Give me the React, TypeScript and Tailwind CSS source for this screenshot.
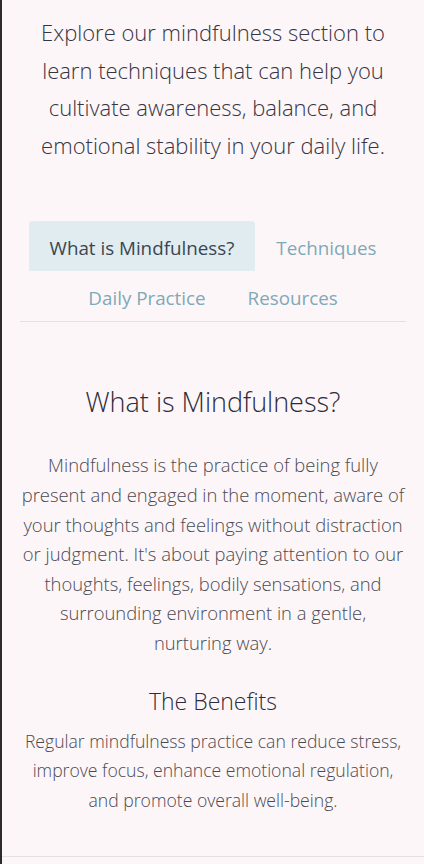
import { useState } from 'react'

const tabs = ['What is Mindfulness?', 'Techniques', 'Daily Practice', 'Resources']

export default function App() {
  const [active, setActive] = useState(0)

  return (
    <main
      className="min-h-[864px] bg-[#fdf6f8] border-l-2 border-[#2b2b2b] text-[#3a3a44]"
      style={{ fontFamily: '"Open Sans", "Noto Sans", sans-serif' }}
    >
      {/* Intro */}
      <section className="px-[38px] pt-[14px] text-center">
        <p className="text-[22px] leading-[37.6px] font-light text-[#343442]">
          Explore our mindfulness section to learn techniques that can help you cultivate awareness,
          balance, and emotional stability in your daily life.
        </p>
      </section>

      {/* Tabs */}
      <nav className="mx-[18px] mt-[57px] flex flex-wrap justify-center border-b border-[#e3e1e3]">
        {tabs.map((tab, i) => (
          <button
            key={tab}
            onClick={() => setActive(i)}
            className={
              i === active
                ? 'h-[50px] px-[21px] pt-[4px] rounded-t-[4px] bg-[#e0ecf0] text-[18.8px] text-[#3b4650]'
                : 'h-[50px] px-[21px] pt-[4px] text-[18.8px] text-[#7ea9b9]'
            }
          >
            {tab}
          </button>
        ))}
      </nav>

      {/* Content */}
      <section className="px-[18px] pt-[60px] pb-[41px] text-center">
        <h2 className="text-[27px] leading-[40px] font-light text-[#2c2c3a]">What is Mindfulness?</h2>
        <p className="mt-[28px] text-[18.4px] leading-[29.6px] font-light text-[#4a4a52]">
          Mindfulness is the practice of being fully present and engaged in the moment, aware of your
          thoughts and feelings without distraction or judgment. It's about paying attention to our
          thoughts, feelings, bodily sensations, and surrounding environment in a gentle, nurturing
          way.
        </p>
        <h3 className="mt-[26px] text-[23px] leading-[34px] font-light text-[#2c2c3a]">The Benefits</h3>
        <p className="mt-[9px] text-[17.6px] leading-[29.6px] font-light text-[#4a4a52]">
          Regular mindfulness practice can reduce stress, improve focus, enhance emotional regulation,
          and promote overall well-being.
        </p>
      </section>

      <div className="border-t border-[#e3e1e3]" />
    </main>
  )
}
